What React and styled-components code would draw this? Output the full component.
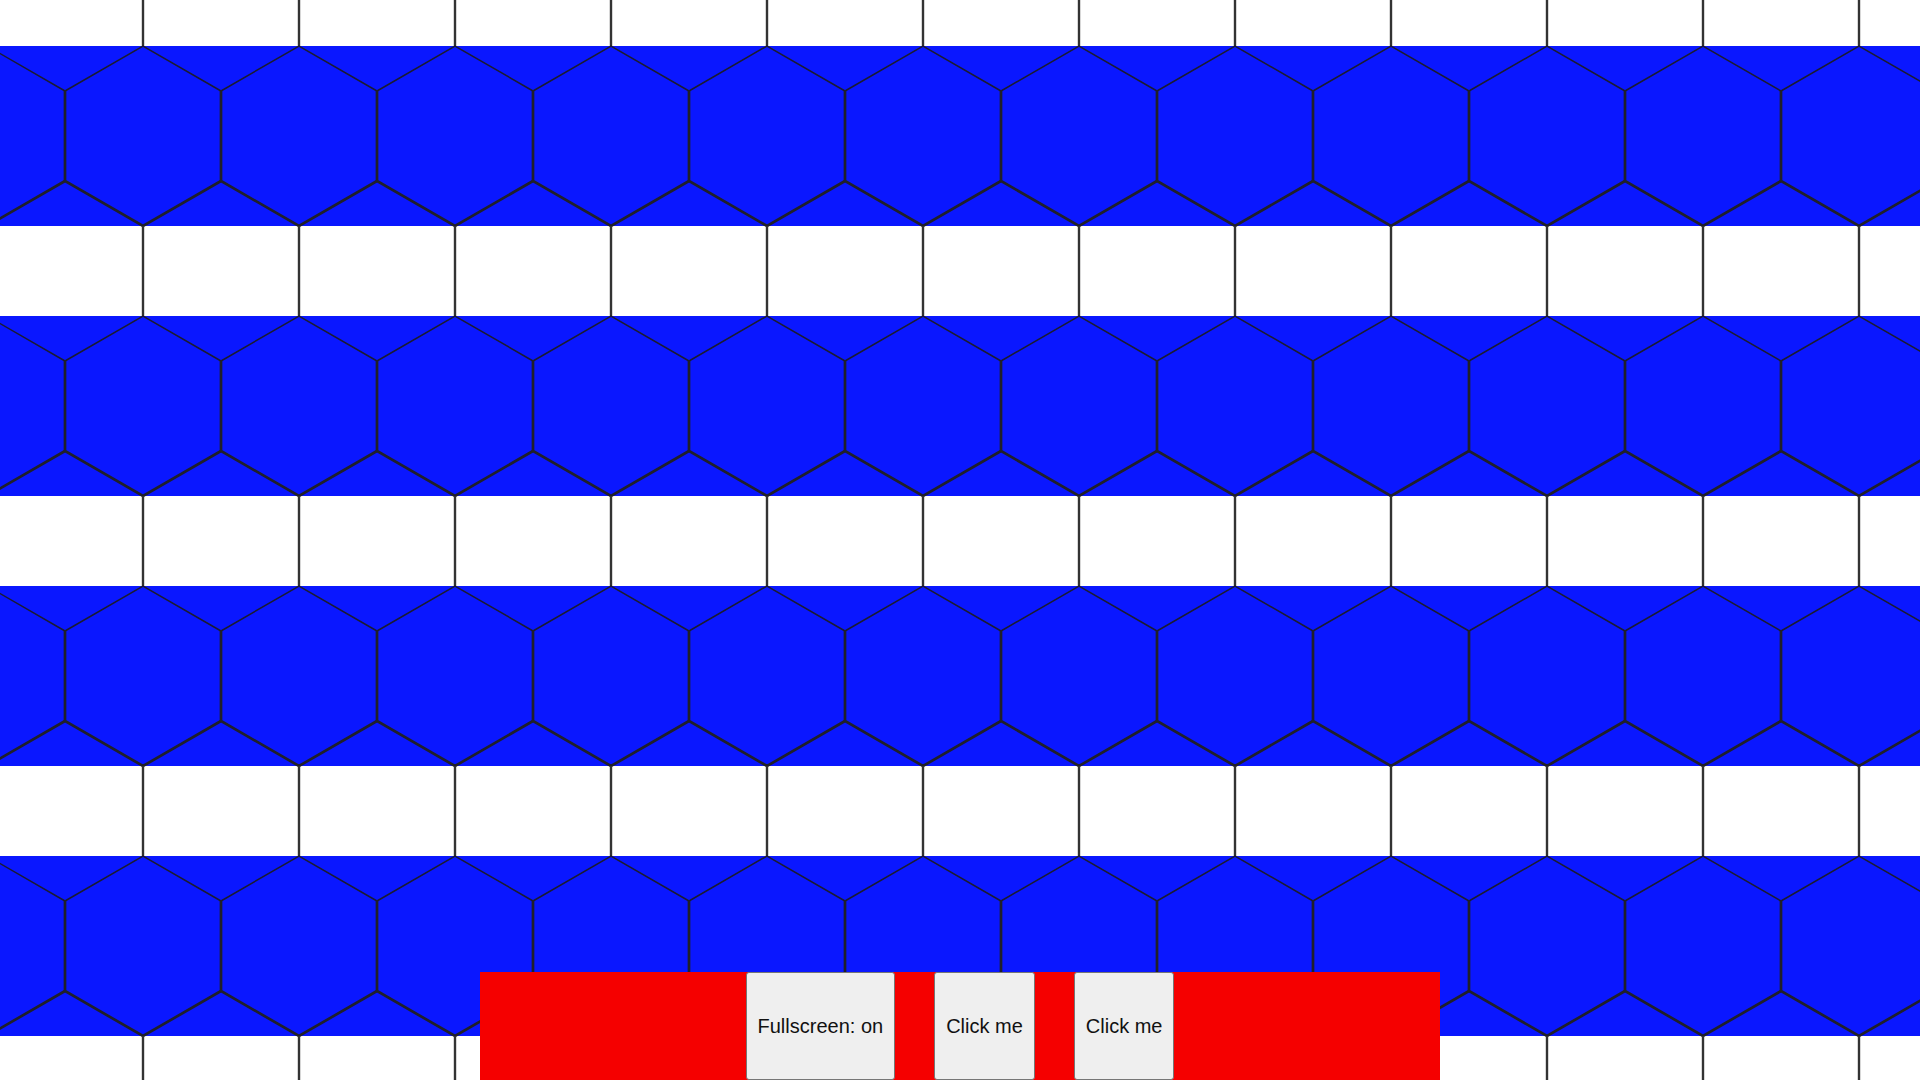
import React from 'react';
import styled, { createGlobalStyle } from 'styled-components';

const GlobalStyle = createGlobalStyle`
    html, body {
        margin: 0;
        padding: 0;
        background: #ffffff;
        overflow: hidden;
    }
    body {
        font-family: "Liberation Sans", Arial, sans-serif;
    }
`;

const Page = styled.div`
    position: relative;
    width: 1920px;
    height: 1080px;
    overflow: hidden;
    background: #ffffff;
`;

const Canvas = styled.svg`
    display: block;
    width: 1920px;
    height: 1080px;
`;

const Toolbar = styled.div`
    position: absolute;
    left: 480px;
    bottom: 0;
    width: 960px;
    height: 108px;
    background: #f50000;
    display: flex;
    justify-content: center;
    align-items: stretch;
    gap: 39px;
`;

const Button = styled.button`
    margin: 0;
    padding: 0 11px;
    background: #efefef;
    border: 1px solid #767676;
    border-radius: 3px;
    color: #111111;
    font-family: "Liberation Sans", Arial, sans-serif;
    font-size: 20px;
    cursor: pointer;
`;

const HEX_W = 156;
const HEX_H = 180;
const PERIOD_Y = 270;
const OFFSET_X = 143;
const OFFSET_Y = 46;
const BLUE = '#0a17ff';

const rows = [-1, 0, 1, 2, 3, 4];
const cols = Array.from({ length: 14 }, (_, i) => i - 1);

const HexRow = ({ row }) => {
    const y = OFFSET_Y + row * PERIOD_Y;
    return (
        <g>
            <rect x="0" y={y} width="1920" height={HEX_H} fill={BLUE} />
            {cols.map((c) => {
                const cx = OFFSET_X + c * HEX_W;
                const l = cx - HEX_W / 2;
                const r = cx + HEX_W / 2;
                return (
                    <g key={c}>
                        <path
                            d={`M${l} ${y + 45} L${cx} ${y} L${r} ${y + 45}`}
                            fill="none"
                            stroke="#1c1c30"
                            strokeWidth="1.5"
                        />
                        <path
                            d={`M${l} ${y + 45} L${l} ${y + 135} L${cx} ${y + 180} L${r} ${y + 135}`}
                            fill="none"
                            stroke="#20202a"
                            strokeWidth="2.7"
                        />
                        <line
                            x1={cx}
                            y1={y + HEX_H}
                            x2={cx}
                            y2={y + PERIOD_Y}
                            stroke="#333333"
                            strokeWidth="2.4"
                        />
                    </g>
                );
            })}
        </g>
    );
};

export default function App() {
    return (
        <>
            <GlobalStyle />
            <Page>
                <Canvas viewBox="0 0 1920 1080" xmlns="http://www.w3.org/2000/svg">
                    {rows.map((r) => (
                        <HexRow key={r} row={r} />
                    ))}
                </Canvas>
                <Toolbar>
                    <Button>Fullscreen: on</Button>
                    <Button>Click me</Button>
                    <Button>Click me</Button>
                </Toolbar>
            </Page>
        </>
    );
}
